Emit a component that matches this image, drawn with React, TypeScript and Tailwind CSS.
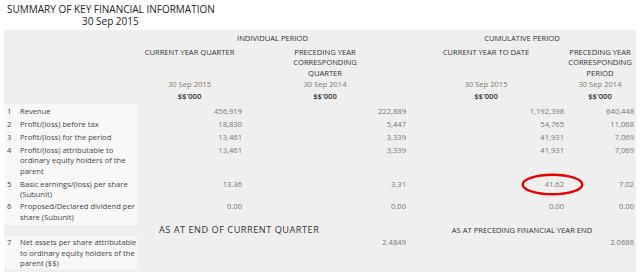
const cols = "grid grid-cols-[133px_107px_164px_158px_70px]"

type Row = {
  no: string
  label: string[]
  values: string[]
  h: string
  pt: string
}

const rows: Row[] = [
  { no: "1", label: ["Revenue"], values: ["456,919", "222,889", "1,192,398", "640,448"], h: "h-[13.3px]", pt: "pt-[1.5px]" },
  { no: "2", label: ["Profit/(loss) before tax"], values: ["18,830", "5,447", "54,765", "11,068"], h: "h-[13.3px]", pt: "pt-[1.5px]" },
  { no: "3", label: ["Profit/(loss) for the period"], values: ["13,461", "3,339", "41,931", "7,069"], h: "h-[13.4px]", pt: "pt-[1.5px]" },
  {
    no: "4",
    label: ["Profit/(loss) attributable to", "ordinary equity holders of the", "parent"],
    values: ["13,461", "3,339", "41,931", "7,069"],
    h: "h-[33.5px]",
    pt: "pt-[1px]",
  },
  { no: "5", label: ["Basic earnings/(loss) per share", "(Subunit)"], values: ["13.36", "3.31", "41.62", "7.02"], h: "h-[22.5px]", pt: "pt-[1.5px]" },
  { no: "6", label: ["Proposed/Declared dividend per", "share (Subunit)"], values: ["0.00", "0.00", "0.00", "0.00"], h: "h-[25px]", pt: "pt-[1.5px]" },
]

function Label({ no, lines }: { no: string; lines: string[] }) {
  return (
    <div className="flex bg-[#f8f8f8] pl-[3px] text-[#444]">
      <span className="w-[13px] shrink-0">{no}</span>
      <span className="whitespace-nowrap">
        {lines.map((l, i) => (
          <div key={i}>{l}</div>
        ))}
      </span>
    </div>
  )
}

export default function App() {
  return (
    <div className="relative h-[272px] w-[640px] bg-white font-['Open_Sans',sans-serif]">
      <div className="pl-[7px] pt-[3px] text-[10px] leading-[12px] text-[#222]">
        <div>SUMMARY OF KEY FINANCIAL INFORMATION</div>
        <div className="pl-[75px]">30 Sep 2015</div>
      </div>

      <div className="ml-[4px] mt-[3px] w-[632px] bg-[#efefef] pb-[3px] text-[7.6px] leading-[10.5px]">
        <div className={`${cols} h-[16.5px] pt-[2.5px] text-[#333]`}>
          <div />
          <div className="col-span-2 text-center">INDIVIDUAL PERIOD</div>
          <div className="col-span-2 text-center">CUMULATIVE PERIOD</div>
        </div>

        <div className={`${cols} text-center text-[#333]`}>
          <div />
          <div className="pr-[2px]">CURRENT YEAR QUARTER</div>
          <div className="pr-[2px]">
            PRECEDING YEAR
            <br />
            CORRESPONDING
            <br />
            QUARTER
          </div>
          <div className="pr-[2px]">CURRENT YEAR TO DATE</div>
          <div className="pr-[2px]">
            PRECEDING YEAR
            <br />
            CORRESPONDING
            <br />
            PERIOD
          </div>
        </div>

        <div className={`${cols} pt-[0.5px] text-center text-[#86786a]`}>
          <div />
          <div className="pr-[2px]">30 Sep 2015</div>
          <div className="pr-[2px]">30 Sep 2014</div>
          <div className="pr-[2px]">30 Sep 2015</div>
          <div className="pr-[2px]">30 Sep 2014</div>
        </div>

        <div className={`${cols} h-[15px] pt-[2px] text-center font-semibold text-[#333]`}>
          <div />
          <div className="pr-[2px]">$$&apos;000</div>
          <div className="pr-[2px]">$$&apos;000</div>
          <div className="pr-[2px]">$$&apos;000</div>
          <div className="pr-[2px]">$$&apos;000</div>
        </div>

        {rows.map((r) => (
          <div key={r.no} className={`${cols} ${r.h}`}>
            <div className={`flex ${r.pt} bg-[#f8f8f8]`}>
              <Label no={r.no} lines={r.label} />
            </div>
            {r.values.map((v, i) => (
              <div key={i} className={`${r.pt} pr-[2px] text-right text-[#777]`}>
                {v}
              </div>
            ))}
          </div>
        ))}

        <div className={`${cols} h-[11px] text-[#333]`}>
          <div />
          <div className="col-span-2 whitespace-nowrap pl-[22px] text-[9.2px] tracking-[0.5px]">AS AT END OF CURRENT QUARTER</div>
          <div className="col-span-2 text-center">AS AT PRECEDING FINANCIAL YEAR END</div>
        </div>

        <div className={`${cols} h-[33px]`}>
          <div className="bg-[#f8f8f8] pt-[1.5px]">
            <Label no="7" lines={["Net assets per share attributable", "to ordinary equity holders of the", "parent ($$)"]} />
          </div>
          <div />
          <div className="pt-[1.5px] pr-[2px] text-right text-[#777]">2.4849</div>
          <div />
          <div className="pt-[1.5px] pr-[2px] text-right text-[#777]">2.0686</div>
        </div>
      </div>

      <svg className="absolute left-[521px] top-[173px]" width="63" height="23" viewBox="0 0 63 23">
        <ellipse cx="31.5" cy="11.5" rx="29.8" ry="9.8" fill="none" stroke="#e60000" strokeWidth="2.4" />
      </svg>
    </div>
  )
}
